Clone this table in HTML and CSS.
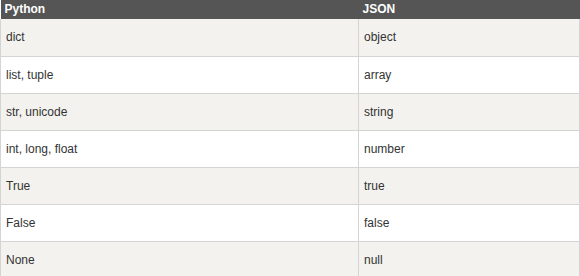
FILE: index.html
```html
<!DOCTYPE html>
<html>
<head>
<meta charset="utf-8">
<link rel="stylesheet" href="styles.css">
</head>
<body>
<table class="map">
  <thead>
    <tr><th class="c1">Python</th><th>JSON</th></tr>
  </thead>
  <tbody>
    <tr><td>dict</td><td>object</td></tr>
    <tr><td>list, tuple</td><td>array</td></tr>
    <tr><td>str, unicode</td><td>string</td></tr>
    <tr><td>int, long, float</td><td>number</td></tr>
    <tr><td>True</td><td>true</td></tr>
    <tr><td>False</td><td>false</td></tr>
    <tr><td>None</td><td>null</td></tr>
  </tbody>
</table>
</body>
</html>
```
FILE: styles.css
```css
html, body {
  margin: 0;
  padding: 0;
  background: #ffffff;
}
.map {
  width: 580px;
  border-collapse: collapse;
  font-family: "Liberation Sans", Arial, sans-serif;
  font-size: 12px;
  color: #333333;
}
.map th {
  background: #555555;
  color: #ffffff;
  font-weight: bold;
  text-align: left;
  height: 19px;
  padding: 0 4px;
  line-height: 19px;
  box-sizing: border-box;
}
.map th.c1 {
  width: 358px;
}
.map td {
  height: 37px;
  padding: 0 5px;
  border-left: 1px solid #d4d4d4;
  border-right: 1px solid #d4d4d4;
  border-bottom: 1px solid #d4d4d4;
  box-sizing: border-box;
  vertical-align: middle;
}
.map tbody tr:nth-child(odd) td {
  background: #f3f2ee;
}
.map tbody tr:nth-child(even) td {
  background: #ffffff;
}
```
